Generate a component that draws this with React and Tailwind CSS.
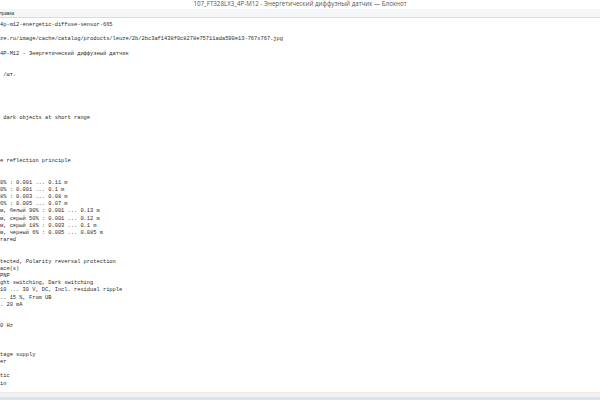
export default function App() {
  const lines = [
    "4p-m12-energetic-diffuse-sensor-665",
    "",
    "ze.ru/image/cache/catalog/products/leuze/2b/2bc3af1438f0c8278e75711ada590e13-767x767.jpg",
    "",
    "4P-M12 - Энергетический диффузный датчик",
    "",
    "",
    " /шт.",
    "",
    "",
    "",
    "",
    "",
    " dark objects at short range",
    "",
    "",
    "",
    "",
    "",
    "e reflection principle",
    "",
    "",
    "0% : 0.001 ... 0.11 m",
    "0% : 0.001 ... 0.1 m",
    "8% : 0.003 ... 0.08 m",
    "6% : 0.005 ... 0.07 m",
    "м, белый 90% : 0.001 ... 0.13 m",
    "м, серый 50% : 0.001 ... 0.12 m",
    "м, серый 18% : 0.003 ... 0.1 m",
    "м, черный 6% : 0.005 ... 0.085 m",
    "rared",
    "",
    "",
    "tected, Polarity reversal protection",
    "ace(s)",
    "PNP",
    "ght switching, Dark switching",
    "10 ... 30 V, DC, Incl. residual ripple",
    ".. 15 %, From UB",
    ". 20 mA",
    "",
    "",
    "0 Hz",
    "",
    "",
    "",
    "tage supply",
    "er",
    "",
    "tic",
    "in",
    "",
  ];
  return (
    <div className="w-[600px] h-[400px] overflow-hidden bg-white flex flex-col">
      <div className="h-[9px] bg-white flex items-center justify-center">
        <span className="text-[6.2px] leading-none text-[#555]" style={{ fontFamily: '"Open Sans", "Noto Sans", sans-serif' }}>
          107_FT328LX3_4P-M12 - Энергетический диффузный датчик — Блокнот
        </span>
      </div>
      <div className="h-[9px] bg-[#f5f6f7] border-b border-[#d7dde4] flex items-center">
        <span className="text-[4.5px] leading-none text-[#333] -ml-[1px]" style={{ fontFamily: '"Noto Sans", sans-serif' }}>
          правка
        </span>
      </div>
      <div className="flex-1 overflow-hidden pt-[4px] pl-0">
        {lines.map((l, i) => (
          <div
            key={i}
            className="h-[7.18px] leading-[7.18px] text-[5.37px] text-[#2a2a2a] whitespace-pre"
            style={{ fontFamily: '"Liberation Mono", monospace' }}
          >
            {l}
          </div>
        ))}
      </div>
      <div className="h-[5px] bg-[#f2f2f2] border-t border-[#ece8e2]"></div>
      <div className="h-[3px] bg-[#dbe3ec]"></div>
    </div>
  );
}
